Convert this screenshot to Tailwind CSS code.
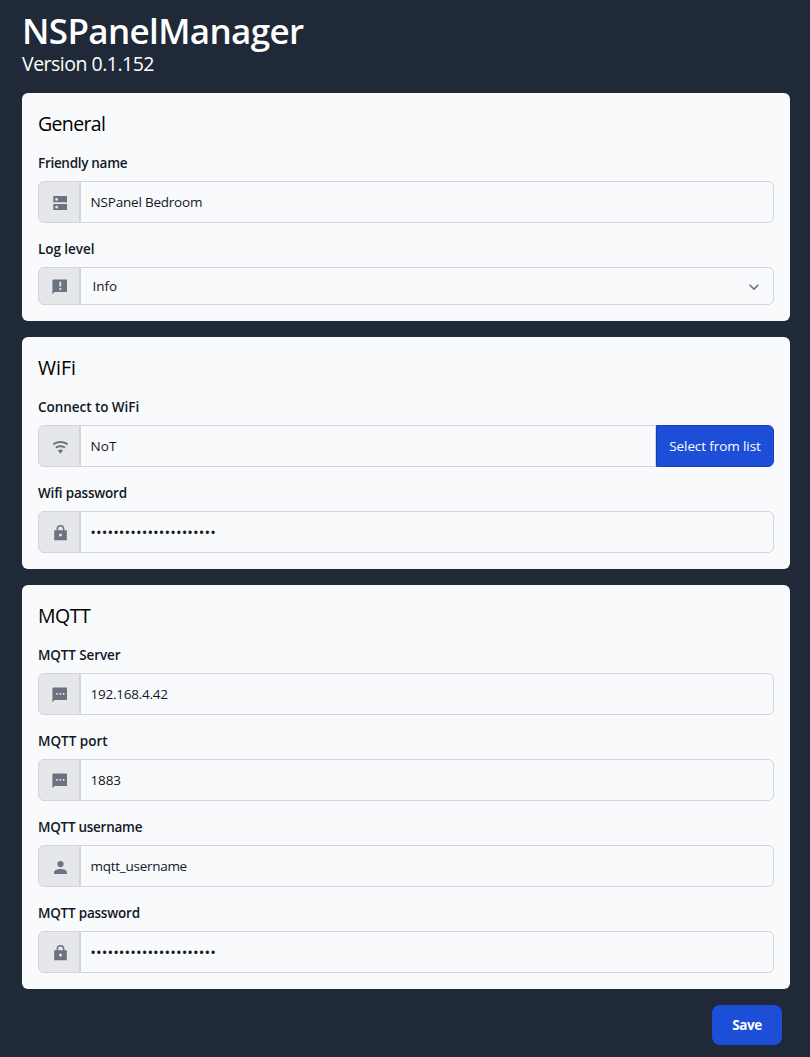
<!DOCTYPE html>
<html lang="en">
<head>
<meta charset="utf-8">
<title>NSPanelManager</title>
<script src="https://cdn.jsdelivr.net/npm/@tailwindcss/browser@4"></script>
</head>
<body class="min-h-screen bg-[#1f2937] font-['Open_Sans','Noto_Sans',sans-serif] text-[13.5px] leading-5 text-[#111827]">
<svg class="hidden" xmlns="http://www.w3.org/2000/svg">
  <symbol id="server" viewBox="0 0 18 18"><path fill-rule="evenodd" d="M2.3 2H16v6.3H2.3zM2.3 10H16v6H2.3zM5.6 4a1.4 1.4 0 1 0 0 2.8a1.4 1.4 0 0 0 0-2.8zM5.6 11.8a1.4 1.4 0 1 0 0 2.8a1.4 1.4 0 0 0 0-2.8z"/></symbol>
  <symbol id="alert" viewBox="0 0 18 18"><path fill-rule="evenodd" d="M2.5 1.4H15.6Q16 1.4 16 1.8V13.7Q16 14.1 15.6 14.1H3.6L1.4 16.2V2.5Q1.4 1.4 2.5 1.4zM8.4 3.8V8.6H10.2V3.8zM8.4 10.1V11.9H10.2V10.1z"/></symbol>
  <symbol id="chat" viewBox="0 0 18 18"><path fill-rule="evenodd" d="M2.5 1.4H15.6Q16 1.4 16 1.8V13.7Q16 14.1 15.6 14.1H3.6L1.4 16.2V2.5Q1.4 1.4 2.5 1.4zM5.2 7.1V8.7H6.8V7.1zM8.5 7.1V8.7H10.1V7.1zM11.8 7.1V8.7H13.4V7.1z"/></symbol>
  <symbol id="wifi" viewBox="0 0 18 18"><path transform="translate(.9 .8) scale(.71)" d="M12,21L15.6,16.2C14.6,15.45 13.35,15 12,15C10.65,15 9.4,15.45 8.4,16.2L12,21M12,3C7.95,3 4.21,4.34 1.2,6.6L3,9C5.5,7.12 8.62,6 12,6C15.38,6 18.5,7.12 21,9L22.8,6.6C19.79,4.34 16.05,3 12,3M12,9C9.3,9 6.81,9.89 4.8,11.4L6.6,13.8C8.1,12.67 9.97,12 12,12C14.03,12 15.9,12.67 17.4,13.8L19.2,11.4C17.19,9.89 14.7,9 12,9Z"/></symbol>
  <symbol id="lock" viewBox="0 0 18 18"><path fill-rule="evenodd" d="M3.2 6.2H5.6V4.9a3.9 3.9 0 0 1 7.8 0V6.2H15.8V16.2H3.2zM7.1 6.2H11.9V4.9a2.4 2.4 0 0 0-4.8 0zM9.5 9.6a1.5 1.5 0 1 0 0 3a1.5 1.5 0 0 0 0-3z"/></symbol>
  <symbol id="user" viewBox="0 0 18 18"><circle cx="9.5" cy="6.1" r="3.1"/><path d="M3.1 15.9V14.2C3.1 12.1 6.2 10.9 9.5 10.9S15.9 12.1 15.9 14.2V15.9z"/></symbol>
</svg>

<main class="flex flex-col pl-[22px] pr-5 pt-2.5">
  <header class="text-white">
    <h1 class="h-10 text-[35px] font-semibold leading-[42px] tracking-[-0.63px]">NSPanelManager</h1>
    <p class="text-[19.5px] leading-7 tracking-[-0.5px]">Version 0.1.152</p>
  </header>

  <div class="mt-[15px] flex flex-col gap-4">
    <section class="flex flex-col gap-4 rounded-md bg-[#f9fafb] p-4">
      <h2 class="h-7 text-[19.5px] leading-[30px] tracking-[-0.65px] text-black">General</h2>
      <div>
        <div class="mb-2 font-semibold tracking-[-0.3px]">Friendly name</div>
        <div class="flex h-[42px]">
          <span class="flex w-[42px] shrink-0 items-center rounded-l-md border border-[#d1d5db] bg-[#e5e7eb] pl-3 pt-0.5 text-[#6b7280]"><svg class="size-[18px] shrink-0 fill-current"><use href="#server"/></svg></span>
          <div class="flex flex-1 items-center rounded-r-md border border-[#d1d5db] pl-[9.6px] tracking-[-0.21px]">NSPanel Bedroom</div>
        </div>
      </div>
      <div>
        <div class="mb-2 font-semibold tracking-[-0.05px]">Log level</div>
        <div class="flex h-[38px]">
          <span class="flex w-[42px] shrink-0 items-center rounded-l-md border border-[#d1d5db] bg-[#e5e7eb] pl-3 pt-0.5 text-[#6b7280]"><svg class="size-[18px] shrink-0 fill-current"><use href="#alert"/></svg></span>
          <div class="flex flex-1 items-center justify-between rounded-r-md border border-[#d1d5db] pl-[11.4px] pr-3.5">Info
            <svg class="mt-px h-1.5 w-2.5 fill-none stroke-[#6b7280] stroke-[1.6]" viewBox="0 0 10 6"><path d="m.6.7 4.4 4.4L9.4.7"/></svg>
          </div>
        </div>
      </div>
    </section>

    <section class="flex flex-col gap-4 rounded-md bg-[#f9fafb] p-4">
      <h2 class="h-7 text-[19.5px] leading-[30px] text-black">WiFi</h2>
      <div>
        <div class="mb-2 font-semibold tracking-[-0.05px]">Connect to WiFi</div>
        <div class="flex h-[42px]">
          <span class="flex w-[42px] shrink-0 items-center rounded-l-md border border-[#d1d5db] bg-[#e5e7eb] pl-3 pt-0.5 text-[#6b7280]"><svg class="size-[18px] shrink-0 fill-current"><use href="#wifi"/></svg></span>
          <div class="flex flex-1 items-center border border-[#d1d5db] pl-[9.6px]">NoT</div>
          <button class="w-[118px] rounded-r-md border border-[#1e40af] bg-[#1d4ed8] tracking-[-0.1px] text-white">Select from list</button>
        </div>
      </div>
      <div>
        <div class="mb-2 font-semibold tracking-[-0.2px]">Wifi password</div>
        <div class="flex h-[42px]">
          <span class="flex w-[42px] shrink-0 items-center rounded-l-md border border-[#d1d5db] bg-[#e5e7eb] pl-3 pt-0.5 text-[#6b7280]"><svg class="size-[18px] shrink-0 fill-current"><use href="#lock"/></svg></span>
          <div class="flex flex-1 items-center rounded-r-md border border-[#d1d5db] pl-[9.3px] text-[15px] tracking-[0.07px]">••••••••••••••••••••••</div>
        </div>
      </div>
    </section>

    <section class="flex flex-col gap-4 rounded-md bg-[#f9fafb] p-4">
      <h2 class="h-7 text-[19.5px] leading-[30px] tracking-[-0.45px] text-black">MQTT</h2>
      <div>
        <div class="mb-2 font-semibold tracking-[-0.12px]">MQTT Server</div>
        <div class="flex h-[42px]">
          <span class="flex w-[42px] shrink-0 items-center rounded-l-md border border-[#d1d5db] bg-[#e5e7eb] pl-3 pt-0.5 text-[#6b7280]"><svg class="size-[18px] shrink-0 fill-current"><use href="#chat"/></svg></span>
          <div class="flex flex-1 items-center rounded-r-md border border-[#d1d5db] pl-[9.6px] tracking-[-0.25px]">192.168.4.42</div>
        </div>
      </div>
      <div>
        <div class="mb-2 font-semibold">MQTT port</div>
        <div class="flex h-[42px]">
          <span class="flex w-[42px] shrink-0 items-center rounded-l-md border border-[#d1d5db] bg-[#e5e7eb] pl-3 pt-0.5 text-[#6b7280]"><svg class="size-[18px] shrink-0 fill-current"><use href="#chat"/></svg></span>
          <div class="flex flex-1 items-center rounded-r-md border border-[#d1d5db] pl-[9.6px] tracking-[-0.2px]">1883</div>
        </div>
      </div>
      <div>
        <div class="mb-2 font-semibold tracking-[-0.27px]">MQTT username</div>
        <div class="flex h-[42px]">
          <span class="flex w-[42px] shrink-0 items-center rounded-l-md border border-[#d1d5db] bg-[#e5e7eb] pl-3 pt-0.5 text-[#6b7280]"><svg class="size-[18px] shrink-0 fill-current"><use href="#user"/></svg></span>
          <div class="flex flex-1 items-center rounded-r-md border border-[#d1d5db] pl-[9.6px] tracking-[-0.28px]">mqtt_username</div>
        </div>
      </div>
      <div>
        <div class="mb-2 font-semibold tracking-[-0.22px]">MQTT password</div>
        <div class="flex h-[42px]">
          <span class="flex w-[42px] shrink-0 items-center rounded-l-md border border-[#d1d5db] bg-[#e5e7eb] pl-3 pt-0.5 text-[#6b7280]"><svg class="size-[18px] shrink-0 fill-current"><use href="#lock"/></svg></span>
          <div class="flex flex-1 items-center rounded-r-md border border-[#d1d5db] pl-[9.3px] text-[15px] tracking-[0.07px]">••••••••••••••••••••••</div>
        </div>
      </div>
    </section>
  </div>

  <div class="mt-4 flex justify-end pr-2">
    <button class="h-10 w-[70px] rounded-lg bg-[#1d4ed8] font-bold tracking-[-0.4px] text-white">Save</button>
  </div>
</main>
</body>
</html>
